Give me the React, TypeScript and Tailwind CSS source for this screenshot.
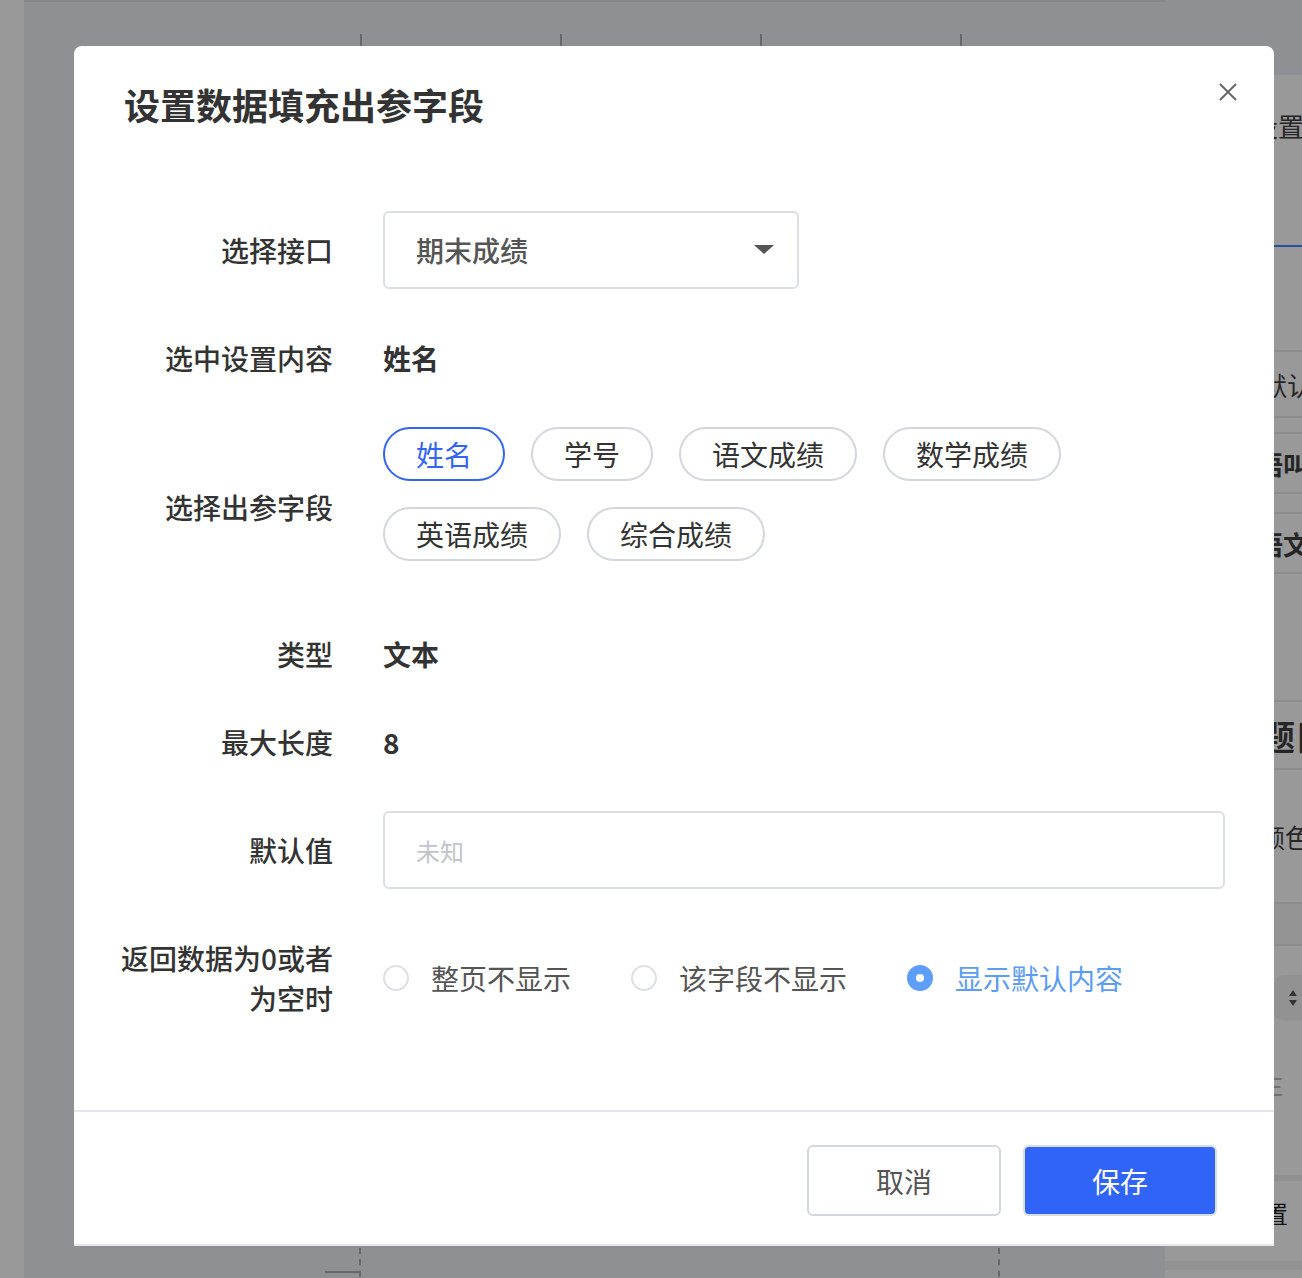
import { useState } from "react";

const fields = ["姓名", "学号", "语文成绩", "数学成绩", "英语成绩", "综合成绩"];
const emptyModes = ["整页不显示", "该字段不显示", "显示默认内容"];

const FormRow = ({
  label,
  className,
  children,
}: {
  label: React.ReactNode;
  className?: string;
  children: React.ReactNode;
}) => (
  <div className={"grid grid-cols-[212px_1fr] gap-x-[50px] items-center " + (className || "")}>
    <div className="text-right text-[28px] leading-[40px] font-medium text-[#333] whitespace-nowrap">{label}</div>
    <div>{children}</div>
  </div>
);

const App = () => {
  const [picked, setPicked] = useState("姓名");
  const [mode, setMode] = useState("显示默认内容");

  return (
    <div className="relative w-[1302px] h-[1278px] overflow-hidden bg-[#8f9094] font-['Noto_Sans_CJK_SC','Noto_Sans',sans-serif]">
      {/* page behind the mask */}
      <div className="flex h-full">
        <div className="w-[24px] bg-[#99999a]" />
        <div className="relative flex-1 border-t-2 border-[#86878b]">
          {[336, 536, 736, 936].map((x) => (
            <div key={x} className="absolute top-[32px] h-[12px] w-[2px] bg-[#65696d]" style={{ left: x }} />
          ))}
          <div className="absolute left-[335px] top-[1246px] h-[40px] border-l-2 border-dashed border-[#65696d]" />
          <div className="absolute left-[974px] top-[1246px] h-[40px] border-l-2 border-dashed border-[#65696d]" />
          <div className="absolute left-[301px] top-[1269px] h-[2px] w-[35px] bg-[#65696d]" />
        </div>
        <div className="w-[137px] mt-[75px] bg-[#99999a] flex flex-col text-[26px] text-[#262626] overflow-hidden">
          <div className="h-[100px] pl-[87px] flex items-center whitespace-nowrap">设置</div>
          <div className="h-[72px] border-b-2 border-[#2b4fa3]" />
          <div className="h-[105px] border-b-2 border-[#8c8c8d]" />
          <div className="h-[66px] pl-[96px] flex items-center whitespace-nowrap border-b-2 border-[#8c8c8d]">默认</div>
          <div className="h-[14px]" />
          <div className="h-[62px] pl-[92px] flex items-center whitespace-nowrap font-bold border-y-2 border-[#8c8c8d]">语叫</div>
          <div className="h-[18px]" />
          <div className="h-[62px] pl-[92px] flex items-center whitespace-nowrap font-bold border-y-2 border-[#8c8c8d]">语文</div>
          <div className="h-[126px]" />
          <div className="h-[70px] pl-[96px] flex items-center whitespace-nowrap font-bold text-[34px] border-y-2 border-[#8c8c8d]">题目</div>
          <div className="h-[132px] pl-[94px] flex items-center whitespace-nowrap">颜色</div>
          <div className="h-[44px] border-y-2 border-[#8c8c8d] bg-[#949495]" />
          <div className="h-[29px]" />
          <div className="h-[46px] ml-[109px] rounded-l-[10px] bg-[#929293] flex items-center justify-end pr-[5px]">
            <svg width="8" height="18" viewBox="0 0 8 18">
              <path d="M4 1L8 7H0Z M4 17L8 11H0Z" fill="#333" />
            </svg>
          </div>
          <div className="h-[154px] pl-[104px] pt-[50px] text-[24px] leading-[30px] text-[#707070] whitespace-nowrap">E</div>
          <div className="h-[6px] bg-[#8f8f90]" />
          <div className="h-[63px] pl-[75px] flex items-center whitespace-nowrap text-[24px] text-[#111]">设置</div>
          <div className="h-[17px]" />
          <div className="h-[9px] bg-[#929293]" />
        </div>
      </div>

      {/* dialog */}
      <div className="absolute left-[74px] top-[46px] w-[1200px] bg-white rounded-t-[8px] border-b-2 border-[#e6e8eb]">
        <div className="relative px-[50px] pt-[34px]">
          <h2 className="text-[36px] leading-[48px] font-bold text-[#333]">设置数据填充出参字段</h2>
          <button className="absolute right-[37px] top-[37px] w-[18px] h-[18px]">
            <svg width="18" height="18" viewBox="0 0 18 18">
              <path d="M1 1L17 17M17 1L1 17" stroke="#666" strokeWidth="2" />
            </svg>
          </button>
        </div>

        <div className="pl-[47px] pr-[49px] pt-[83px] pb-[92px] flex flex-col">
          <FormRow label="选择接口">
            <div className="w-[416px] h-[78px] border-2 border-[#dcdfe6] rounded-[6px] pl-[31px] pr-[23px] flex items-center justify-between">
              <span className="text-[28px] font-medium text-[#555]">期末成绩</span>
              <svg width="20" height="10" viewBox="0 0 20 10">
                <path d="M0 0H20L10 9Z" fill="#555" />
              </svg>
            </div>
          </FormRow>

          <FormRow label="选中设置内容" className="mt-[49px]">
            <span className="text-[28px] leading-[40px] font-bold text-[#333]">姓名</span>
          </FormRow>

          <FormRow label="选择出参字段" className="mt-[49px]">
            <div className="flex flex-wrap gap-x-[26px] w-[700px]">
              {fields.map((f) => (
                <button
                  key={f}
                  onClick={() => setPicked(f)}
                  className={
                    "h-[54px] mb-[26px] rounded-full border-2 px-[31px] text-[28px] leading-[50px] " +
                    (picked === f ? "border-[#3264f5] text-[#3264f5]" : "border-[#d3d6dc] text-[#333]")
                  }
                >
                  {f}
                </button>
              ))}
            </div>
          </FormRow>

          <FormRow label="类型" className="mt-[47px]">
            <span className="text-[28px] leading-[40px] font-bold text-[#333]">文本</span>
          </FormRow>

          <FormRow label="最大长度" className="mt-[48px]">
            <span className="text-[28px] leading-[40px] font-bold text-[#333]">8</span>
          </FormRow>

          <FormRow label="默认值" className="mt-[49px]">
            <input
              placeholder="未知"
              className="w-[842px] h-[78px] border-2 border-[#dcdfe6] rounded-[6px] pl-[31px] text-[24px] text-[#333] placeholder:text-[#c0c4cc] outline-none"
            />
          </FormRow>

          <FormRow
            label={
              <>
                返回数据为0或者
                <br />
                为空时
              </>
            }
            className="mt-[49px]"
          >
            <div className="flex items-center gap-x-[60px]">
              {emptyModes.map((m) => (
                <label key={m} onClick={() => setMode(m)} className="flex items-center cursor-pointer">
                  {mode === m ? (
                    <span className="w-[26px] h-[26px] rounded-full bg-[#5c9ef8] flex items-center justify-center">
                      <span className="w-[8px] h-[8px] rounded-full bg-white" />
                    </span>
                  ) : (
                    <span className="w-[26px] h-[26px] rounded-full border-2 border-[#dcdfe6]" />
                  )}
                  <span
                    className={
                      "ml-[22px] text-[28px] leading-[40px] " + (mode === m ? "text-[#5b9cf6]" : "text-[#555]")
                    }
                  >
                    {m}
                  </span>
                </label>
              ))}
            </div>
          </FormRow>
        </div>

        <div className="border-t-2 border-[#e4e8ee] flex justify-end gap-x-[22px] pt-[33px] pb-[28px] pr-[57px]">
          <button className="w-[194px] h-[71px] rounded-[6px] border-2 border-[#d3d7de] bg-white text-[28px] text-[#555]">
            取消
          </button>
          <button className="w-[194px] h-[71px] rounded-[6px] border-2 border-[#d8dde6] bg-[#3064f6] text-[28px] text-white">
            保存
          </button>
        </div>
      </div>
    </div>
  );
};

export default App;
